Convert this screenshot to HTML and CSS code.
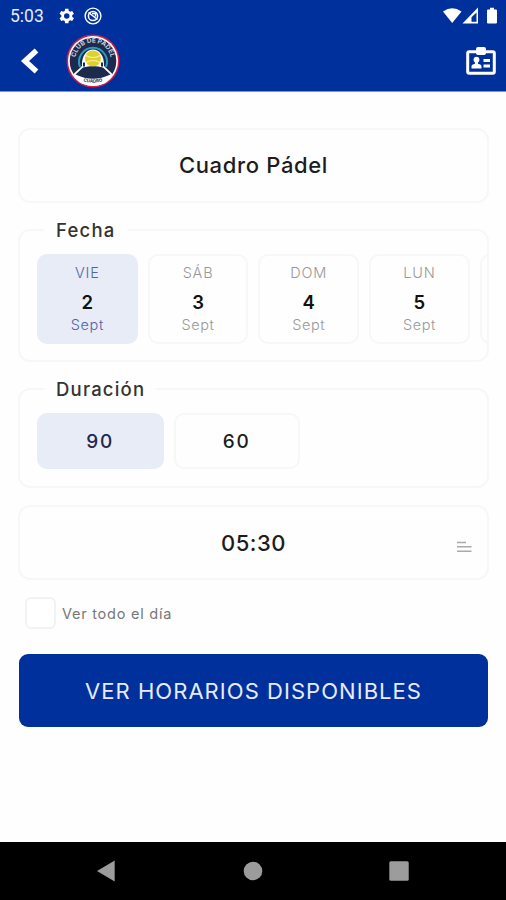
FILE: index.html
```html
<!DOCTYPE html>
<html lang="es">
<head>
    <meta charset="UTF-8">
    <meta name="viewport" content="width=device-width, initial-scale=1.0">
    <title>Cuadro Pádel</title>
    <link rel="stylesheet" href="styles.css">
</head>
<body>
    <header class="header">
        <div class="statusbar">
            <span class="clock">5:03</span>
            <svg class="gear" width="20" height="20" viewBox="0 0 24 24"><path fill="#fff" fill-rule="evenodd" d="M19.4 13a7.500 7.500 0 0 0 0-2l2.100-1.600-2-3.500-2.500 1a7.300 7.300 0 0 0-1.700-1l-.4-2.600h-4l-.4 2.600a7.300 7.300 0 0 0-1.700 1l-2.500-1-2 3.500L6.400 11a7.500 7.500 0 0 0 0 2l-2.100 1.600 2 3.500 2.500-1a7.300 7.300 0 0 0 1.700 1l.4 2.600h4l.4-2.600a7.300 7.300 0 0 0 1.700-1l2.500 1 2-3.500zM12.900 15.300a3.300 3.300 0 1 1 0-6.600 3.300 3.300 0 0 1 0 6.600z"/></svg>
            <svg class="sync" width="18" height="18" viewBox="0 0 18 18" fill="none" stroke="#fff">
                <circle cx="9" cy="9" r="7.900" stroke-width="1.400"/>
                <circle cx="9" cy="9" r="4.600" stroke-width="1.500"/>
                <path stroke-width="1.500" d="M4.500 5.500l9 7M8 6.500h3.500v3"/>
            </svg>
            <svg class="signals" width="56" height="18" viewBox="0 0 56 18" fill="#fff">
                <path d="M0 4.500Q9.200-1.800 18.500 4.500L9.200 16z"/>
                <path fill-rule="evenodd" d="M35 .5V16.500H19.500zM33.500 5.500L28.500 10.300V14.700H33.500z" />
                <path d="M47 .7h4v1.800h2q1 0 1 1v12q0 1-1 1h-8q-1 0-1-1v-12q0-1 1-1h2z"/>
            </svg>
        </div>
        <div class="toolbar">
            <svg class="back" width="20" height="26" viewBox="0 0 20 26"><path d="M16.500 2.500L5 13l11.500 10.500" fill="none" stroke="#fff" stroke-width="5.500"/></svg>
            <svg class="logo" width="54" height="54" viewBox="0 0 54 54">
                <defs>
                    <path id="topArc" d="M10.500 33A17.800 17.800 0 1 1 43.500 33"/>
                    <path id="bottomArc" d="M13 45.500Q27 52 41 45.500"/>
                </defs>
                <circle cx="27" cy="27" r="26.500" fill="#d91c45"/>
                <circle cx="27" cy="27" r="25" fill="#fff"/>
                <circle cx="27" cy="27" r="23.300" fill="#1c2b4d"/>
                <path d="M14 33A14 14 0 1 1 40 33" fill="none" stroke="#2a9cc4" stroke-width="2"/>
                <path d="M16 32C15 10 39 10 38 32L46.500 40Q43 47 38.500 49.500Q27 54 15.500 49.500Q11 47 7.500 40z" fill="#fff"/>
                <path d="M17 33.500Q27 30.500 37 33.500L44.500 40.500Q27 49 9.500 40.500z" fill="#1c2b4d"/>
                <path d="M18 28.500v4M36 28.500v4" stroke="#1c2b4d" stroke-width="2"/>
                <circle cx="27" cy="24.500" r="8" fill="#ded12b"/>
                <path d="M19.800 21.500Q27 25.500 34.200 21.500M20 28.500Q27 24.500 34 28.500" fill="none" stroke="#f6f3b0" stroke-width="1.200"/>
                <text class="logo-text"><textPath href="#topArc" startOffset="50%">CLUB DE PADEL</textPath></text>
                <text class="logo-small"><textPath href="#bottomArc" startOffset="50%">CUADRO</textPath></text>
            </svg>
            <svg class="card-icon" width="30" height="28" viewBox="0 0 30 28">
                <rect x="1.700" y="4.700" width="26.600" height="21.600" rx="1.500" fill="none" stroke="#fff" stroke-width="3"/>
                <rect x="10" y="0" width="10" height="8" rx="2" fill="#fff"/>
                <circle cx="10.500" cy="12.700" r="2.900" fill="#fff"/>
                <path d="M5.500 21.500v-2q0-2 3.500-2.700v-2h3v2q3.500.7 3.500 2.700v2zM17.500 12h6.500v3h-6.500zM17.500 17.500h6.500v3h-6.500z" fill="#fff"/>
            </svg>
        </div>
    </header>

    <main class="content">
        <div class="box title">Cuadro Pádel</div>

        <fieldset class="group dates">
            <legend>Fecha</legend>
            <div class="dateList">
                <div class="date selected"><span class="day">VIE</span><b>2</b><span class="month">Sept</span></div>
                <div class="date"><span class="day">SÁB</span><b>3</b><span class="month">Sept</span></div>
                <div class="date"><span class="day">DOM</span><b>4</b><span class="month">Sept</span></div>
                <div class="date"><span class="day">LUN</span><b>5</b><span class="month">Sept</span></div>
                <div class="date"></div>
            </div>
        </fieldset>

        <fieldset class="group durations">
            <legend class="wide">Duración</legend>
            <div class="durationList">
                <div class="duration selected">90</div>
                <div class="duration">60</div>
            </div>
        </fieldset>

        <div class="box time">
            <span>05:30</span>
            <svg width="15" height="12" viewBox="0 0 15 12" stroke="#aaa" stroke-width="1.500"><path d="M0 1.500h9M0 5.800h14.500M0 10.300h14.500"/></svg>
        </div>

        <label class="allDay"><input type="checkbox"><span>Ver todo el día</span></label>

        <button class="submit">VER HORARIOS DISPONIBLES</button>
    </main>

    <nav class="navbar">
        <svg width="20" height="22" viewBox="0 0 20 22"><path d="M1 11L18.700.5v21z" fill="#9c9c9c"/></svg>
        <svg width="20" height="20" viewBox="0 0 20 20"><circle cx="10" cy="10" r="9.300" fill="#9c9c9c"/></svg>
        <svg width="20" height="20" viewBox="0 0 20 20"><rect x=".3" y=".3" width="19.400" height="19.400" rx="1.500" fill="#9c9c9c"/></svg>
    </nav>
</body>
</html>
```
FILE: styles.css
```css
* {
    box-sizing: border-box;
}

body {
    margin: 0;
    height: 900px;
    display: flex;
    flex-direction: column;
    overflow: hidden;
    background-color: #fefefe;
    color: #1c1c1c;
    font-family: Inter, sans-serif;
}

.header {
    height: 92px;
    background-color: #00309c;
    border-bottom: 1px solid #8090cc;
}

.statusbar {
    display: flex;
    align-items: center;
    height: 32px;
    padding: 0 7px 0 10px;
}

.clock {
    width: 46px;
    color: #e6eaf8;
    font: 17.500px Roboto, sans-serif;
}

.sync {
    margin-left: 8px;
}

.signals {
    margin-left: auto;
}

.toolbar {
    display: flex;
    align-items: center;
    height: 58px;
    padding: 0 10px 0 20px;
}

.logo {
    margin-left: 26px;
}

.logo-text {
    fill: #c9cfdc;
    font: bold 6.500px Inter, sans-serif;
    text-anchor: middle;
}

.logo-small {
    fill: #1c2b4d;
    font: bold 4.500px Inter, sans-serif;
    text-anchor: middle;
}

.card-icon {
    margin-left: auto;
}

.content {
    flex: 1;
    padding: 36px 17px 0 18px;
}

.box {
    display: flex;
    align-items: center;
    justify-content: center;
    height: 75px;
    border: 2px solid #f7f7f7;
    border-radius: 12px;
    font-size: 22px;
    font-weight: 500;
}

.title {
    padding-bottom: 1px;
    letter-spacing: 0.65px;
}

.group {
    min-width: 0;
    margin: 0;
    padding: 12px 0 0 17px;
    border: 2px solid #f7f7f7;
    border-radius: 12px;
}

.group legend {
    width: 84px;
    height: 24px;
    margin-left: 7px;
    padding-left: 12px;
    color: #333;
    font-size: 18.500px;
    font-weight: 500;
    line-height: 25px;
    letter-spacing: 1.200px;
}

.group legend.wide {
    width: 112px;
}

.dates {
    height: 144px;
    margin-top: 15px;
}

.dateList {
    display: flex;
    gap: 10px;
    overflow: hidden;
}

.date {
    display: flex;
    flex-direction: column;
    align-items: center;
    flex: 0 0 100.700px;
    height: 90px;
    padding-top: 8px;
    border: 2px solid #f7f7f7;
    border-radius: 10px;
    color: #999;
    font-size: 14.500px;
    font-weight: 300;
    line-height: 18px;
}

.day {
    letter-spacing: 0.8px;
}

.date b {
    margin: 12px 0 6px;
    color: #111;
    font-size: 18.500px;
    font-weight: 600;
    line-height: 16px;
}

.month {
    letter-spacing: 0.6px;
}

.date.selected {
    border-color: #e8ecf6;
    background-color: #e8ecf6;
    color: #5064a4;
}

.durations {
    height: 111px;
    margin-top: 15px;
}

.durationList {
    display: flex;
    gap: 10px;
}

.duration {
    display: flex;
    align-items: center;
    justify-content: center;
    width: 126.500px;
    height: 56px;
    border: 2px solid #f7f7f7;
    border-radius: 10px;
    font-size: 19px;
    font-weight: 500;
    letter-spacing: 1.800px;
}

.duration.selected {
    border-color: #e8ecf6;
    background-color: #e8ecf6;
    color: #22294a;
}

.time {
    margin-top: 17px;
    padding: 0 15px;
    letter-spacing: 0.5px;
}

.time span {
    flex: 1;
    padding-left: 15px;
    text-align: center;
}

.time svg {
    margin-top: 8px;
}

.allDay {
    display: flex;
    align-items: center;
    margin: 17px 0 0 7px;
    color: #777;
    font-size: 14.500px;
    letter-spacing: 0.75px;
}

.allDay input {
    appearance: none;
    width: 31px;
    height: 32px;
    margin: 0 6px 0 0;
    border: 2px solid #f2f2f2;
    border-radius: 6px;
    background-color: #fff;
}

.submit {
    display: block;
    width: 469px;
    height: 73px;
    margin: 25px 0 0 1px;
    border: none;
    border-radius: 9px;
    background-color: #00309c;
    color: #e8ecfa;
    font-family: Inter, sans-serif;
    font-size: 22px;
    letter-spacing: 1.050px;
}

.navbar {
    display: flex;
    align-items: center;
    justify-content: space-between;
    height: 58px;
    padding: 0 97px 0 96px;
    background-color: #000;
}
```
